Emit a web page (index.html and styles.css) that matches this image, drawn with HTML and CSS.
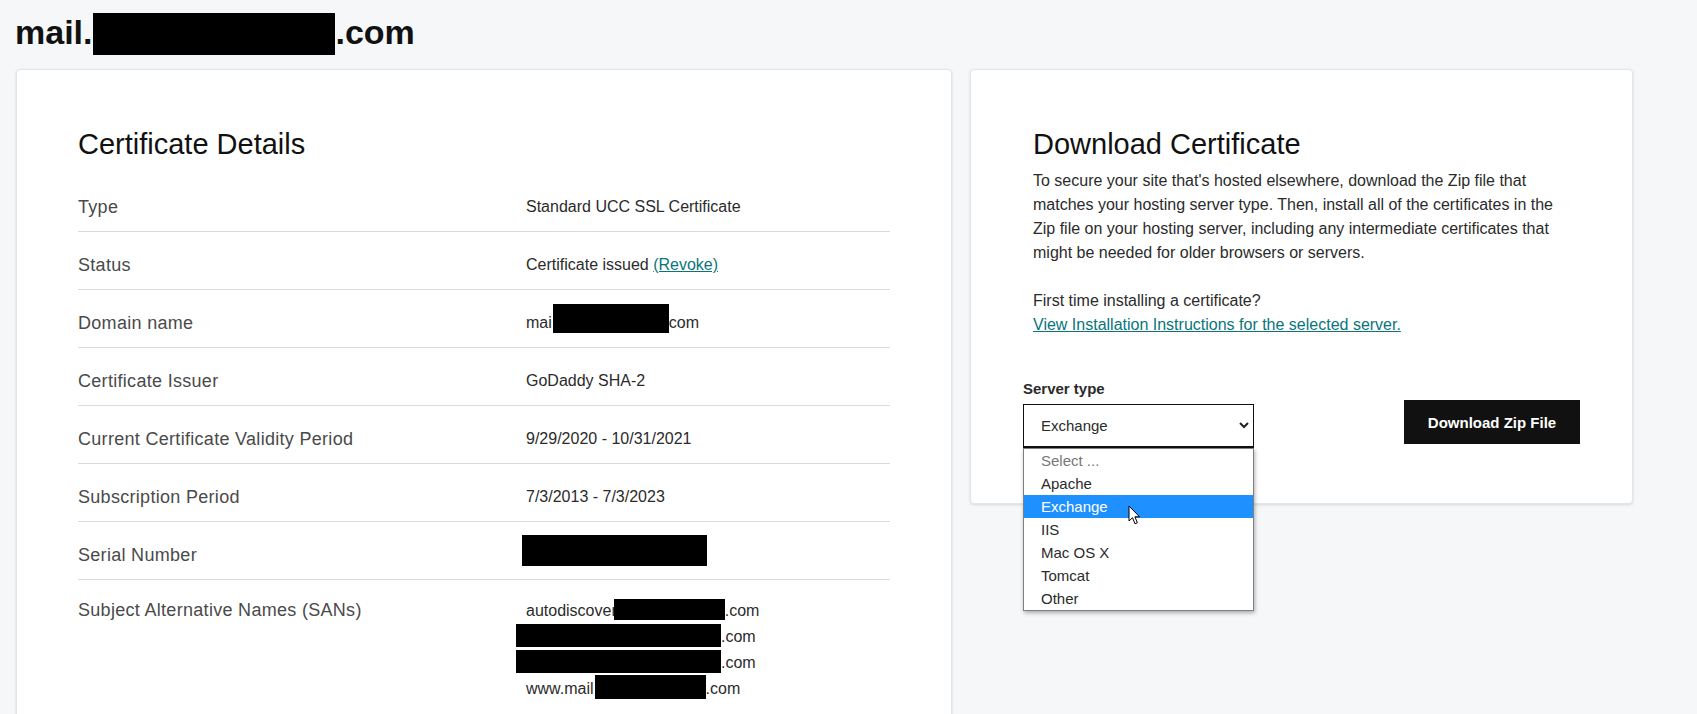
FILE: index.html
```html
<!DOCTYPE html>
<html lang="en">
<head>
<meta charset="utf-8">
<title>mail.com – Certificate</title>
<link rel="stylesheet" href="styles.css">
</head>
<body>
<div class="page">
  <h1 class="domain">mail.<span class="redact r-title"></span>.com</h1>
  <div class="layout">
    <section class="card details">
      <h2 class="card-title">Certificate Details</h2>
      <div class="rows">
        <div class="row"><div class="label">Type</div><div class="value">Standard UCC SSL Certificate</div></div>
        <div class="row"><div class="label">Status</div><div class="value">Certificate issued <a href="#" class="link">(Revoke)</a></div></div>
        <div class="row"><div class="label">Domain name</div><div class="value">mai<span class="redact r-domain"></span>com</div></div>
        <div class="row"><div class="label">Certificate Issuer</div><div class="value">GoDaddy SHA-2</div></div>
        <div class="row"><div class="label">Current Certificate Validity Period</div><div class="value">9/29/2020 - 10/31/2021</div></div>
        <div class="row"><div class="label">Subscription Period</div><div class="value">7/3/2013 - 7/3/2023</div></div>
        <div class="row"><div class="label">Serial Number</div><div class="value"><span class="redact r-serial"></span></div></div>
        <div class="row row-sans"><div class="label">Subject Alternative Names (SANs)</div>
          <div class="value sans">
            <div>autodiscover<span class="redact r-san1"></span>.com</div>
            <div><span class="redact r-san2"></span>.com</div>
            <div><span class="redact r-san3"></span>.com</div>
            <div>www.mail<span class="redact r-san4"></span>.com</div>
          </div>
        </div>
      </div>
    </section>
    <section class="card download">
      <h2 class="card-title">Download Certificate</h2>
      <p class="intro">To secure your site that's hosted elsewhere, download the Zip file that matches your hosting server type. Then, install all of the certificates in the Zip file on your hosting server, including any intermediate certificates that might be needed for older browsers or servers.</p>
      <p class="first">First time installing a certificate?<br><a href="#" class="link">View Installation Instructions for the selected server.</a></p>
      <div class="form-row">
        <div class="field">
          <div class="field-label">Server type</div>
          <div class="select-wrap">
            <div class="select"><span>Exchange</span>
              <svg class="chev" width="10" height="7" viewBox="0 0 10 7"><polyline points="1,1 5,5 9,1" fill="none" stroke="#222" stroke-width="2"/></svg>
            </div>
            <ul class="options">
              <li class="placeholder">Select ...</li>
              <li>Apache</li>
              <li class="active">Exchange
                <svg class="cursor" width="13" height="21" viewBox="0 0 13 21"><path d="M1 1 L1 16 L4.5 12.7 L7 18.8 L9.4 17.8 L6.9 11.8 L11.6 11.8 Z" fill="#fff" stroke="#000" stroke-width="1" stroke-linejoin="round"/></svg>
              </li>
              <li>IIS</li>
              <li>Mac OS X</li>
              <li>Tomcat</li>
              <li>Other</li>
            </ul>
          </div>
        </div>
        <button class="btn" type="button">Download Zip File</button>
      </div>
    </section>
  </div>
</div>
</body>
</html>
```

FILE: styles.css
```css
html, body {
  margin: 0;
  padding: 0;
}

body {
  background: #f5f7f8;
  font-family: "Liberation Sans", Arial, sans-serif;
  color: #2b2b2b;
  overflow: hidden;
}

.page {
  padding: 12px 0 0 16px;
}

.domain {
  margin: 0 0 0 -1px;
  height: 40px;
  font-size: 34px;
  font-weight: 700;
  line-height: 40px;
  color: #111;
}

.redact {
  display: inline-block;
  background: #000;
}

.r-title {
  width: 242px;
  height: 42px;
  vertical-align: -9px;
  margin-top: -12px;
  margin-bottom: -2px;
  margin-left: 1px;
}

.layout {
  display: flex;
  align-items: flex-start;
  gap: 18px;
  margin-top: 17px;
}

.card {
  background: #fff;
  border: 1px solid #e2e6e9;
  border-radius: 4px;
  box-shadow: 0 1px 3px rgba(0, 0, 0, 0.12);
  box-sizing: border-box;
}

.details {
  width: 936px;
  padding: 56px 61px 60px;
}

.download {
  width: 663px;
  padding: 56px 62px 55px;
}

.card-title {
  margin: 0;
  font-size: 29px;
  font-weight: 400;
  line-height: 36px;
  color: #111;
}

.rows {
  margin-top: 12px;
}

.row {
  display: grid;
  grid-template-columns: 448px 1fr;
  padding: 21px 0 12px;
  border-bottom: 1px solid #d6dce0;
  line-height: 24px;
}

.row-sans {
  padding-top: 18px;
  border-bottom: none;
}

.label {
  font-size: 18px;
  color: #4a4a4a;
  letter-spacing: 0.3px;
}

.value {
  font-size: 16px;
  color: #2b2b2b;
}

.sans {
  line-height: 26px;
}

.link {
  color: #09757a;
  text-decoration: underline;
}

.r-domain {
  width: 116px;
  height: 29px;
  vertical-align: -5px;
  margin-top: -8px;
  margin-left: 1px;
}

.r-serial {
  width: 185px;
  height: 31px;
  vertical-align: -6px;
  margin-top: -14px;
  margin-left: -4px;
}

.r-san1 {
  width: 111px;
  height: 21px;
  vertical-align: -4px;
  margin-left: -3px;
}

.r-san2,
.r-san3 {
  width: 205px;
  height: 23px;
  vertical-align: -5px;
  margin-left: -10px;
  margin-top: -4px;
}

.r-san4 {
  width: 111px;
  height: 24px;
  vertical-align: -5px;
  margin-left: 1px;
  margin-top: -4px;
}

.intro {
  margin: 7px 0 0;
  max-width: 535px;
  font-size: 16px;
  line-height: 24px;
}

.first {
  margin: 24px 0 0;
  font-size: 16px;
  line-height: 24px;
}

.form-row {
  display: flex;
  align-items: flex-end;
  gap: 150px;
  margin: 42px 0 0 -10px;
}

.field {
  flex-shrink: 0;
}

.field-label {
  font-size: 15px;
  font-weight: 700;
  line-height: 20px;
  color: #2b2b2b;
  margin-bottom: 5px;
}

.select-wrap {
  position: relative;
  width: 231px;
}

.select {
  box-sizing: border-box;
  width: 231px;
  height: 44px;
  border: 1px solid #111;
  border-bottom-width: 2px;
  display: flex;
  align-items: center;
  justify-content: space-between;
  padding: 0 4px 0 17px;
  font-size: 15px;
  color: #2b2b2b;
}

.options {
  position: absolute;
  top: 100%;
  left: 0;
  z-index: 5;
  box-sizing: border-box;
  width: 231px;
  margin: 0;
  padding: 0;
  list-style: none;
  background: #fff;
  border: 1px solid #7f7f7f;
  box-shadow: 1px 2px 4px rgba(0, 0, 0, 0.3);
}

.options li {
  height: 23px;
  line-height: 23px;
  padding-left: 17px;
  font-size: 15px;
  color: #2b2b2b;
}

.options .placeholder {
  color: #777;
}

.options .active {
  position: relative;
  background: #1e90ff;
  color: #fff;
}

.cursor {
  position: absolute;
  left: 104px;
  top: 10px;
}

.btn {
  flex-shrink: 0;
  width: 176px;
  height: 44px;
  margin-bottom: 4px;
  border: none;
  border-radius: 0;
  background: #111;
  color: #fff;
  font-family: "Liberation Sans", Arial, sans-serif;
  font-size: 15px;
  font-weight: 700;
  padding: 0;
}
```
